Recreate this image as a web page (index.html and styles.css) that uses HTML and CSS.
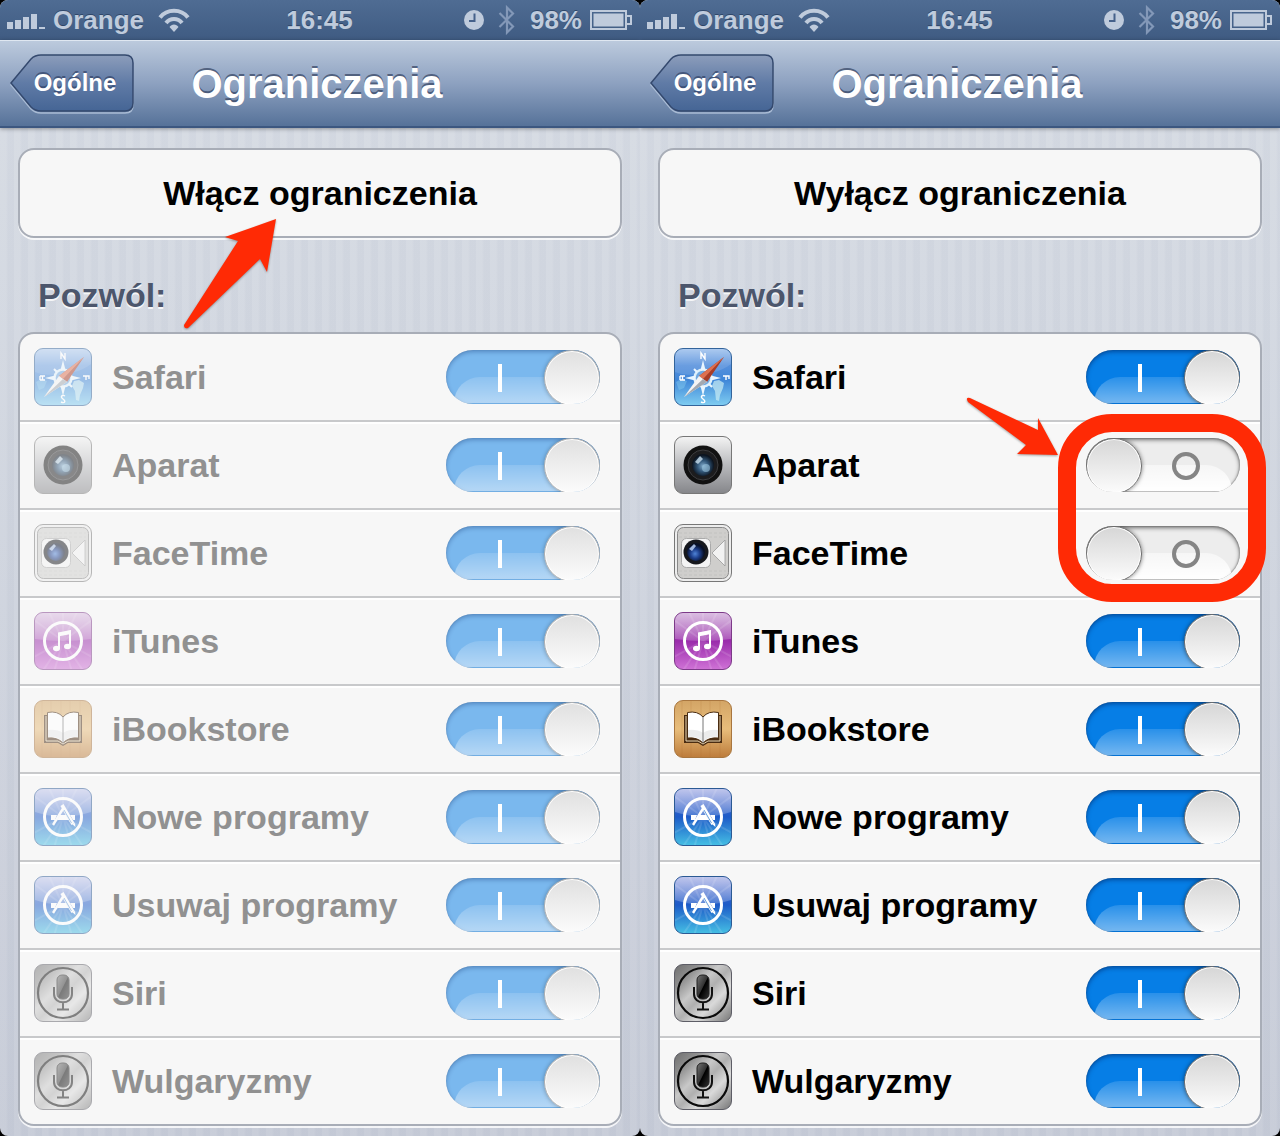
FILE: index.html
```html
<!DOCTYPE html>
<html lang="pl">
<head>
    <meta charset="UTF-8">
    <meta name="viewport" content="width=device-width, initial-scale=1.0">
    <title>Ograniczenia</title>
    <link rel="stylesheet" href="styles.css">
</head>
<body>
    <!-- Shared icons -->
    <svg class="defs" width="0" height="0" aria-hidden="true">
        <defs>
            <linearGradient id="safariBg" x1="0" y1="0" x2="0" y2="1">
                <stop offset="0" stop-color="#a3c4ee"/><stop offset=".3" stop-color="#5690dc"/><stop offset=".55" stop-color="#3f86d8"/><stop offset="1" stop-color="#7fcdf1"/>
            </linearGradient>
            <linearGradient id="greyBg" x1="0" y1="0" x2="0" y2="1">
                <stop offset="0" stop-color="#f4f4f4"/><stop offset=".5" stop-color="#b9babd"/><stop offset="1" stop-color="#85868a"/>
            </linearGradient>
            <radialGradient id="lens" cx=".5" cy=".55" r=".5">
                <stop offset="0" stop-color="#7fa9c9"/><stop offset=".5" stop-color="#33587a"/><stop offset="1" stop-color="#0b1420"/>
            </radialGradient>
            <radialGradient id="lensBlue" cx=".45" cy=".6" r=".5">
                <stop offset="0" stop-color="#4f83d6"/><stop offset=".5" stop-color="#1d3f8c"/><stop offset="1" stop-color="#081026"/>
            </radialGradient>
            <linearGradient id="itunesBg" x1="0" y1="0" x2="0" y2="1">
                <stop offset="0" stop-color="#a35bb4"/><stop offset=".5" stop-color="#9a2cab"/><stop offset="1" stop-color="#cf72d6"/>
            </linearGradient>
            <linearGradient id="storeBg" x1="0" y1="0" x2="0" y2="1">
                <stop offset="0" stop-color="#5f6fd0"/><stop offset=".5" stop-color="#1d5bc8"/><stop offset="1" stop-color="#45bfe4"/>
            </linearGradient>
            <linearGradient id="shine" x1="0" y1="0" x2="0" y2="1">
                <stop offset="0" stop-color="#fff" stop-opacity=".6"/><stop offset="1" stop-color="#fff" stop-opacity=".18"/>
            </linearGradient>
            <linearGradient id="woodBg" x1="0" y1="0" x2="0" y2="1">
                <stop offset="0" stop-color="#d3a566"/><stop offset=".5" stop-color="#e8bd7b"/><stop offset="1" stop-color="#bd7c3b"/>
            </linearGradient>
            <linearGradient id="steelBg" x1="0" y1="0" x2="1" y2="1">
                <stop offset="0" stop-color="#6f6f6f"/><stop offset=".2" stop-color="#8d8d8d"/><stop offset=".4" stop-color="#c8c8c8"/><stop offset=".52" stop-color="#b0b0b0"/><stop offset=".68" stop-color="#dadada"/><stop offset="1" stop-color="#747474"/>
            </linearGradient>
            <linearGradient id="micBg" x1="0" y1="0" x2="1" y2="1">
                <stop offset="0" stop-color="#777"/><stop offset=".48" stop-color="#333"/><stop offset=".52" stop-color="#000"/><stop offset="1" stop-color="#333"/>
            </linearGradient>
            <linearGradient id="backBg" x1="0" y1="0" x2="0" y2="1">
                <stop offset="0" stop-color="#8c9dbb"/><stop offset=".5" stop-color="#607ba6"/><stop offset="1" stop-color="#456595"/>
            </linearGradient>
            <clipPath id="tile"><rect x="1" y="1" width="56" height="56" rx="8"/></clipPath>
        </defs>

        <symbol id="icon-safari" viewBox="0 0 58 58">
            <rect x=".5" y=".5" width="57" height="57" rx="8.5" fill="url(#safariBg)" stroke="#33649b"/>
            <path d="M1 9a8 8 0 0 1 8-8h40a8 8 0 0 1 8 8v7C44 27 14 30 1 24z" fill="#fff" opacity=".12"/>
            <path d="M40 33l5-1 5 3-1 5-3 7-1 6-3-1-1-9-3-5z" fill="#c9edf3" opacity=".7"/>
            <path d="M2 34l5-3 6 2-3 7-5 2z" fill="#8ed4f1" opacity=".4"/>
            <circle cx="29" cy="30" r="8.500" fill="#6fa9e2" stroke="#def0fb" stroke-width="2.500"/>
            <path d="M29 12l2.500 10h-5zM29 48l2.500-10h-5zM11 30l10-2.500v5zM47 30l-10-2.500v5z" fill="#e9f6ff"/>
            <path d="M20 21l3 3M38 39l-3-3" stroke="#e9f6ff" stroke-width="2"/>
            <path d="M27 11V5l4 6V5M31 48c-3-2-5 1-2 3s2 5-2 3M6 28v4M6 28h5M6 32h5M8.500 28v4M49 28h6v3M52 28v4" fill="none" stroke="#fff" stroke-width="1.400"/>
            <path d="M50 9L33 34l-8-6z" fill="#a83d27"/><path d="M50 9L29 31l-4-3z" fill="#dd7050"/>
            <path d="M10 49l15-21 8 6z" fill="#f4f4f4"/><path d="M10 49l19-18 4 3z" fill="#a3a9b1"/>
        </symbol>

        <symbol id="icon-camera" viewBox="0 0 58 58">
            <rect x=".5" y=".5" width="57" height="57" rx="8.5" fill="url(#greyBg)" stroke="#777"/>
            <circle cx="29" cy="29" r="19.5" fill="#111"/>
            <circle cx="29" cy="29" r="15" fill="#1c1c1e" stroke="#3d3d3f"/>
            <circle cx="29" cy="29" r="11" fill="url(#lens)"/>
            <path d="M21 26l5-6 3 3-5 5z" fill="#c9e0ef" opacity=".8"/>
            <circle cx="32" cy="32" r="4" fill="#9bc4dd" opacity=".6"/>
        </symbol>

        <symbol id="icon-facetime" viewBox="0 0 58 58">
            <rect x=".5" y=".5" width="57" height="57" rx="8.5" fill="#ededed" stroke="#777"/>
            <rect x="3.5" y="3.5" width="51" height="51" rx="6" fill="#cfcecc" stroke="#888"/>
            <path d="M5 9h47M5 13h47M5 47h47M5 51h47" stroke="#c2c2c0" stroke-dasharray="3 2"/>
            <path d="M38 29l13-13v26z" fill="#f2f2f2" stroke="#999" stroke-width=".8"/>
            <rect x="7.500" y="14.500" width="29" height="29" rx="5" fill="#f4f4f4" stroke="#aaa"/>
            <circle cx="22" cy="28" r="12.500" fill="#16181d"/>
            <circle cx="22" cy="28" r="9" fill="url(#lensBlue)"/>
            <path d="M15 25l5-5 2 2-4 5z" fill="#b8d0f4" opacity=".85"/>
        </symbol>

        <symbol id="icon-itunes" viewBox="0 0 58 58">
            <rect x=".5" y=".5" width="57" height="57" rx="8.5" fill="url(#itunesBg)" stroke="#7c3a88"/>
            <path clip-path="url(#tile)" d="M29 29L8 60M29 29L20 60M29 29l9 31M29 29l21 31M29 29L0 45M29 29l29 16M29 29L0 8M29 29L15 0M29 29V0M29 29L43 0M29 29L58 8" stroke="#fff" stroke-width="2" opacity=".12"/>
            <path d="M1 9a8 8 0 0 1 8-8h40a8 8 0 0 1 8 8v18Q29 31 1 27z" fill="url(#shine)"/>
            <circle cx="29" cy="29" r="18.500" fill="none" stroke="#fff" stroke-width="3"/>
            <path d="M25 36V22l11-2.500V34" fill="none" stroke="#fff" stroke-width="2"/>
            <path d="M24 20.500l13-2.500v4l-13 2.500z" fill="#fff"/>
            <ellipse cx="22.500" cy="36.500" rx="3.500" ry="2.800" fill="#fff"/><ellipse cx="33.500" cy="34.500" rx="3.500" ry="2.800" fill="#fff"/>
        </symbol>

        <symbol id="icon-books" viewBox="0 0 58 58">
            <rect x=".5" y=".5" width="57" height="57" rx="8.5" fill="url(#woodBg)" stroke="#a8763f"/>
            <path d="M8 1v56M17 1v56M27 1v56M36 1v56M46 1v56" stroke="#a9682c" opacity=".18"/>
            <path d="M10 15h4v23q9-1 15 5 6-6 15-5V15h4v28H34l-5 3-5-3H10z" fill="#4a2c11"/>
            <path d="M12 16v25h12l5 3 5-3h12V16" fill="none" stroke="#e9d7b5" stroke-width="1"/>
            <path d="M13.500 12.500q10-2 15.500 4.500 5.500-6.500 15.500-4.500V38q-10-1-15.500 5-5.500-6-15.500-5z" fill="#fff" stroke="#4a2c11"/>
            <path d="M14 30q9-1 15 3 6-4 15-3v7q-10-1-15 5-5-6-15-5z" fill="#e4e4e4" opacity=".7"/>
            <path d="M29 17v26" stroke="#777"/>
        </symbol>

        <symbol id="icon-store" viewBox="0 0 58 58">
            <rect x=".5" y=".5" width="57" height="57" rx="8.5" fill="url(#storeBg)" stroke="#2b5a94"/>
            <path clip-path="url(#tile)" d="M29 29L8 60M29 29L20 60M29 29l9 31M29 29l21 31M29 29L0 45M29 29l29 16M29 29L0 8M29 29L15 0M29 29V0M29 29L43 0M29 29L58 8" stroke="#fff" stroke-width="2" opacity=".12"/>
            <path d="M1 9a8 8 0 0 1 8-8h40a8 8 0 0 1 8 8v15Q29 33 1 24z" fill="url(#shine)"/>
            <circle cx="29" cy="29" r="18.500" fill="none" stroke="#fff" stroke-width="3"/>
            <path d="M17 27h6l-2 5h-4zM26 27h6l3 5H23zM36 27h5v5h-2z" fill="#fff"/>
            <path d="M30 19L19 37" stroke="#fff" stroke-width="2.400"/>
            <path d="M28 17l11 19" stroke="#fff" stroke-width="3.600"/><path d="M30 22l7.500 13" stroke="#3a83d0" stroke-width=".8"/>
            <path d="M38 36l3.500 3-.5-4z" fill="#fff"/>
        </symbol>

        <symbol id="icon-siri" viewBox="0 0 58 58">
            <rect x=".5" y=".5" width="57" height="57" rx="8.5" fill="url(#steelBg)" stroke="#5d5d66"/>
            <circle cx="29" cy="29" r="25" fill="none" stroke="#0a0a0a" stroke-width="2.200"/>
            <rect x="23" y="11" width="12" height="24" rx="5" fill="url(#micBg)" stroke="#222"/>
            <path d="M20 23v7c0 11 18 11 18 0v-7M29 38v7M23 45.500h12" fill="none" stroke="#111" stroke-width="2"/>
        </symbol>

        <symbol id="icon-signal" viewBox="0 0 38 18">
            <path d="M0 11h6v7H0zM8 9h6v9H8zM16 6h6v12h-6zM24 3h6v15h-6zM32 16h6v2h-6z"/>
        </symbol>

        <symbol id="icon-wifi" viewBox="0 0 32 24">
            <path d="M2 9.500C9 .5 23 .5 30 9.500M8 15c4-5.500 12-5.500 16 0" fill="none" stroke="currentColor" stroke-width="4"/>
            <path d="M11.500 19c2-3.500 7-3.500 9 0L16 24z"/>
        </symbol>

        <symbol id="icon-clock" viewBox="0 0 20 20">
            <circle cx="10" cy="10" r="10"/>
            <path d="M10.500 3.500v7.500H5" fill="none" stroke="#45618a" stroke-width="2"/>
        </symbol>

        <symbol id="icon-bluetooth" viewBox="0 0 18 30">
            <path d="M1.500 8L15 21.500 9 27.500v-25L15 8.500 1.500 22" fill="none" stroke="currentColor" stroke-width="2.200"/>
        </symbol>

        <symbol id="icon-battery" viewBox="0 0 42 20">
            <path d="M1 1h35v18H1zM37 6h4v8h-4" fill="none" stroke="currentColor" stroke-width="2"/>
            <path d="M3.500 3.500h30v13h-30z"/>
        </symbol>

        <symbol id="back-shape" viewBox="0 0 124 60">
            <path d="M1 31L21 7q4-4 10-4h84q8 0 8 8v40q0 8-8 8H31q-6 0-10-4z" fill="none" stroke="#a9bbd4" stroke-width="1.500"/>
            <path d="M1 29L21 5q4-4 10-4h84q8 0 8 8v40q0 8-8 8H31q-6 0-10-4z" fill="url(#backBg)" stroke="#34496e" stroke-width="1.500"/>
        </symbol>
    </svg>

    <main class="screens">
        <!-- Restrictions turned off -->
        <section class="phone">
            <div class="status-bar">
                <div class="status-left">
                    <svg class="signal"><use href="#icon-signal"/></svg>
                    <span>Orange</span>
                    <svg class="wifi"><use href="#icon-wifi"/></svg>
                </div>
                <span class="time">16:45</span>
                <div class="status-right">
                    <svg class="clock"><use href="#icon-clock"/></svg>
                    <svg class="bluetooth"><use href="#icon-bluetooth"/></svg>
                    <span>98%</span>
                    <svg class="battery"><use href="#icon-battery"/></svg>
                </div>
            </div>
            <header class="nav-bar">
                <button class="back" type="button"><svg><use href="#back-shape"/></svg><span>Ogólne</span></button>
                <h1>Ograniczenia</h1>
            </header>
            <div class="content">
                <button class="card main-button" type="button">Włącz ograniczenia</button>
                <h2>Pozwól:</h2>
                <ul class="card list disabled">
                    <li>
                        <svg class="app-icon"><use href="#icon-safari"/></svg>
                        <label for="safari1">Safari</label>
                        <span class="switch"><input type="checkbox" id="safari1" checked disabled><span class="mark"></span></span>
                    </li>
                    <li>
                        <svg class="app-icon"><use href="#icon-camera"/></svg>
                        <label for="aparat1">Aparat</label>
                        <span class="switch"><input type="checkbox" id="aparat1" checked disabled><span class="mark"></span></span>
                    </li>
                    <li>
                        <svg class="app-icon"><use href="#icon-facetime"/></svg>
                        <label for="facetime1">FaceTime</label>
                        <span class="switch"><input type="checkbox" id="facetime1" checked disabled><span class="mark"></span></span>
                    </li>
                    <li>
                        <svg class="app-icon"><use href="#icon-itunes"/></svg>
                        <label for="itunes1">iTunes</label>
                        <span class="switch"><input type="checkbox" id="itunes1" checked disabled><span class="mark"></span></span>
                    </li>
                    <li>
                        <svg class="app-icon"><use href="#icon-books"/></svg>
                        <label for="ibookstore1">iBookstore</label>
                        <span class="switch"><input type="checkbox" id="ibookstore1" checked disabled><span class="mark"></span></span>
                    </li>
                    <li>
                        <svg class="app-icon"><use href="#icon-store"/></svg>
                        <label for="nowe1">Nowe programy</label>
                        <span class="switch"><input type="checkbox" id="nowe1" checked disabled><span class="mark"></span></span>
                    </li>
                    <li>
                        <svg class="app-icon"><use href="#icon-store"/></svg>
                        <label for="usuwaj1">Usuwaj programy</label>
                        <span class="switch"><input type="checkbox" id="usuwaj1" checked disabled><span class="mark"></span></span>
                    </li>
                    <li>
                        <svg class="app-icon"><use href="#icon-siri"/></svg>
                        <label for="siri1">Siri</label>
                        <span class="switch"><input type="checkbox" id="siri1" checked disabled><span class="mark"></span></span>
                    </li>
                    <li>
                        <svg class="app-icon"><use href="#icon-siri"/></svg>
                        <label for="wulgaryzmy1">Wulgaryzmy</label>
                        <span class="switch"><input type="checkbox" id="wulgaryzmy1" checked disabled><span class="mark"></span></span>
                    </li>
                </ul>
            </div>
            <svg class="arrow arrow-up" viewBox="0 0 100 116" aria-hidden="true">
                <path d="M96 3L45 21l13 4L4 109q0 4 4 3l72-69 7 13z"/>
            </svg>
        </section>

        <!-- Restrictions turned on -->
        <section class="phone">
            <div class="status-bar">
                <div class="status-left">
                    <svg class="signal"><use href="#icon-signal"/></svg>
                    <span>Orange</span>
                    <svg class="wifi"><use href="#icon-wifi"/></svg>
                </div>
                <span class="time">16:45</span>
                <div class="status-right">
                    <svg class="clock"><use href="#icon-clock"/></svg>
                    <svg class="bluetooth"><use href="#icon-bluetooth"/></svg>
                    <span>98%</span>
                    <svg class="battery"><use href="#icon-battery"/></svg>
                </div>
            </div>
            <header class="nav-bar">
                <button class="back" type="button"><svg><use href="#back-shape"/></svg><span>Ogólne</span></button>
                <h1>Ograniczenia</h1>
            </header>
            <div class="content">
                <button class="card main-button" type="button">Wyłącz ograniczenia</button>
                <h2>Pozwól:</h2>
                <ul class="card list">
                    <li>
                        <svg class="app-icon"><use href="#icon-safari"/></svg>
                        <label for="safari2">Safari</label>
                        <span class="switch"><input type="checkbox" id="safari2" checked><span class="mark"></span></span>
                    </li>
                    <li>
                        <svg class="app-icon"><use href="#icon-camera"/></svg>
                        <label for="aparat2">Aparat</label>
                        <span class="switch"><input type="checkbox" id="aparat2"><span class="mark"></span></span>
                    </li>
                    <li>
                        <svg class="app-icon"><use href="#icon-facetime"/></svg>
                        <label for="facetime2">FaceTime</label>
                        <span class="switch"><input type="checkbox" id="facetime2"><span class="mark"></span></span>
                    </li>
                    <li>
                        <svg class="app-icon"><use href="#icon-itunes"/></svg>
                        <label for="itunes2">iTunes</label>
                        <span class="switch"><input type="checkbox" id="itunes2" checked><span class="mark"></span></span>
                    </li>
                    <li>
                        <svg class="app-icon"><use href="#icon-books"/></svg>
                        <label for="ibookstore2">iBookstore</label>
                        <span class="switch"><input type="checkbox" id="ibookstore2" checked><span class="mark"></span></span>
                    </li>
                    <li>
                        <svg class="app-icon"><use href="#icon-store"/></svg>
                        <label for="nowe2">Nowe programy</label>
                        <span class="switch"><input type="checkbox" id="nowe2" checked><span class="mark"></span></span>
                    </li>
                    <li>
                        <svg class="app-icon"><use href="#icon-store"/></svg>
                        <label for="usuwaj2">Usuwaj programy</label>
                        <span class="switch"><input type="checkbox" id="usuwaj2" checked><span class="mark"></span></span>
                    </li>
                    <li>
                        <svg class="app-icon"><use href="#icon-siri"/></svg>
                        <label for="siri2">Siri</label>
                        <span class="switch"><input type="checkbox" id="siri2" checked><span class="mark"></span></span>
                    </li>
                    <li>
                        <svg class="app-icon"><use href="#icon-siri"/></svg>
                        <label for="wulgaryzmy2">Wulgaryzmy</label>
                        <span class="switch"><input type="checkbox" id="wulgaryzmy2" checked><span class="mark"></span></span>
                    </li>
                </ul>
            </div>
            <div class="highlight"></div>
            <svg class="arrow arrow-right" viewBox="0 0 100 64" aria-hidden="true">
                <path d="M96 59L76 22v12L8 2Q3 1 6 6l58 43-9 9z"/>
            </svg>
        </section>
    </main>
</body>
</html>
```

FILE: styles.css
```css
* {
    box-sizing: border-box;
}

body {
    margin: 0;
    background-color: #000;
    font-family: "Liberation Sans", Arial, Helvetica, sans-serif;
    font-weight: bold;
}

h1, h2, ul {
    margin: 0;
    padding: 0;
}

button {
    font: inherit;
    cursor: pointer;
}

.defs {
    position: absolute;
}

.screens {
    display: flex;
    min-height: 100vh;
}

.phone {
    position: relative;
    flex: 1;
    min-width: 0;
    border-radius: 8px;
    overflow: hidden;
    background:
        repeating-linear-gradient(90deg, rgba(255, 255, 255, 0.05) 0 6px, rgba(120, 135, 165, 0.03) 8px 14px),
        linear-gradient(#d7dce4, #c6cbd7);
}

/* Status bar */
.status-bar {
    display: grid;
    grid-template-columns: 1fr auto 1fr;
    align-items: center;
    height: 40px;
    padding: 0 8px 0 7px;
    background: linear-gradient(#4f6c93, #3f5b82);
    color: #bfcbdc;
    fill: currentColor;
    font-size: 26px;
    text-shadow: 0 -1px 0 rgba(20, 40, 70, 0.5);
}

.status-left, .status-right {
    display: flex;
    align-items: center;
    gap: 8px;
}

.status-right {
    justify-content: flex-end;
}

.signal {
    width: 38px;
    height: 18px;
}

.wifi {
    width: 32px;
    height: 24px;
    margin-left: 6px;
}

.clock {
    width: 20px;
    height: 20px;
}

.bluetooth {
    width: 18px;
    height: 30px;
    margin: 0 6px;
    color: #8398b8;
}

.battery {
    width: 42px;
    height: 20px;
}

/* Navigation bar */
.nav-bar {
    display: grid;
    grid-template-columns: 1fr auto 1fr;
    align-items: center;
    height: 88px;
    padding: 0 16px 0 10px;
    border-top: 1px solid #dfe7f1;
    border-bottom: 2px solid #3c5780;
    background: linear-gradient(#bccadd, #8da1c0 50%, #567299);
    box-shadow: 0 1px 4px rgba(0, 0, 0, 0.35);
}

.nav-bar h1 {
    color: #fff;
    font-size: 40px;
    line-height: 48px;
    text-shadow: 0 -2px 0 rgba(50, 65, 95, 0.7);
}

.back {
    position: relative;
    width: 124px;
    height: 60px;
    padding: 0 0 2px 6px;
    border: none;
    background: none;
    color: #fff;
    font-size: 24px;
    text-shadow: 0 -2px 0 rgba(40, 55, 90, 0.6);
}

.back svg {
    position: absolute;
    top: 0;
    left: 0;
    width: 100%;
    height: 100%;
}

.back span {
    position: relative;
}

/* Page content */
.content {
    padding: 20px 18px 10px;
}

.card {
    width: 100%;
    border: 2px solid #a8adb7;
    border-radius: 16px;
    background-color: #f7f7f7;
    box-shadow: 0 2px 0 rgba(255, 255, 255, 0.8);
}

.main-button {
    display: block;
    height: 90px;
    padding: 0;
    color: #000;
    font-size: 34px;
}

.content h2 {
    padding: 37px 20px 17px;
    color: #4c566c;
    font-size: 34px;
    line-height: 40px;
    text-shadow: 0 2px 0 rgba(255, 255, 255, 0.8);
}

.list {
    list-style: none;
    font-size: 34px;
}

.list li {
    display: flex;
    align-items: center;
    gap: 20px;
    height: 88px;
    padding: 0 20px 0 14px;
    border-bottom: 2px solid #c8c9cb;
}

.list li + li {
    box-shadow: inset 0 2px 0 #fff;
}

.list li:last-child {
    height: 86px;
    border-bottom: none;
    border-radius: 0 0 14px 14px;
}

.list label {
    flex: 1;
}

.app-icon {
    width: 58px;
    height: 58px;
}

.disabled .app-icon {
    opacity: 0.5;
}

.disabled label {
    color: #919191;
}

/* On/off switch */
.switch {
    position: relative;
    width: 154px;
    height: 54px;
}

.switch input {
    appearance: none;
    position: relative;
    display: block;
    width: 154px;
    height: 54px;
    margin: 0;
    border-radius: 27px;
    background-color: #ededed;
    box-shadow: inset 0 2px 4px rgba(0, 0, 0, 0.5), inset 0 0 2px rgba(0, 0, 0, 0.5);
    overflow: hidden;
}

.switch input::before {
    content: "";
    position: absolute;
    right: 8px;
    bottom: 1px;
    left: 0;
    height: 26px;
    border-radius: 0 26px 0 0;
    background: linear-gradient(rgba(255, 255, 255, 0.5), #fff);
}

.switch input::after {
    content: "";
    position: absolute;
    top: 0;
    left: 0;
    width: 54px;
    height: 54px;
    border: 1px solid #6d6d6d;
    border-radius: 50%;
    background: linear-gradient(#d6d6d6, #fcfcfc);
    box-shadow: inset 0 0 0 1px #fff, 0 0 4px rgba(0, 0, 0, 0.5);
}

.switch input:checked {
    background-color: #067ee6;
    box-shadow: inset 0 2px 4px rgba(0, 30, 90, 0.5), inset 0 0 1px rgba(0, 0, 0, 0.4);
}

.switch input:checked::before {
    right: 0;
    left: 8px;
    border-radius: 26px 0 0 0;
    background: linear-gradient(rgba(255, 255, 255, 0.14), rgba(255, 255, 255, 0.44));
}

.switch input:checked::after {
    right: 0;
    left: auto;
}

.mark {
    position: absolute;
    top: 14px;
    right: 40px;
    width: 28px;
    height: 28px;
    border: 4px solid #858585;
    border-radius: 50%;
    pointer-events: none;
}

input:checked + .mark {
    right: auto;
    left: 52px;
    width: 4px;
    border: none;
    border-radius: 0;
    background-color: #fff;
}

.disabled .switch input {
    background-color: #7ab8ee;
    box-shadow: inset 0 2px 4px rgba(0, 30, 90, 0.3), inset 0 0 1px rgba(0, 0, 0, 0.2);
}

.disabled .switch input::after {
    border-color: #b0b0b0;
    background: linear-gradient(#e0e0e0, #fcfcfc);
    box-shadow: inset 0 0 0 1px #fff, 0 0 4px rgba(0, 0, 0, 0.3);
}

/* Red annotations over the screens */
.arrow {
    position: absolute;
    fill: #ff2a05;
    filter: drop-shadow(0 1px 1px rgba(0, 0, 0, 0.35));
    pointer-events: none;
}

.arrow-up {
    top: 216px;
    left: calc(50% - 140px);
    width: 100px;
    height: 116px;
}

.arrow-right {
    top: 396px;
    right: 218px;
    width: 100px;
    height: 64px;
}

.highlight {
    position: absolute;
    top: 414px;
    right: 14px;
    width: 208px;
    height: 188px;
    border: 18px solid #ff2a05;
    border-radius: 54px;
    pointer-events: none;
}
```
